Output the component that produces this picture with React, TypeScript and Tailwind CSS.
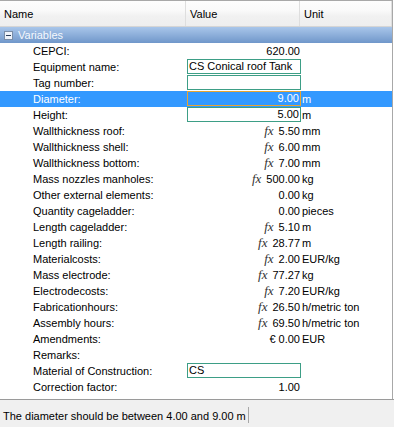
type Row = {
  name: string;
  value?: string;
  unit?: string;
  fx?: boolean;
  box?: "left" | "right";
  selected?: boolean;
};

const rows: Row[] = [
  { name: "CEPCI:", value: "620.00" },
  { name: "Equipment name:", value: "CS Conical roof Tank", box: "left" },
  { name: "Tag number:", value: "", box: "left" },
  { name: "Diameter:", value: "9.00", unit: "m", box: "right", selected: true },
  { name: "Height:", value: "5.00", unit: "m", box: "right" },
  { name: "Wallthickness roof:", value: "5.50", unit: "mm", fx: true },
  { name: "Wallthickness shell:", value: "6.00", unit: "mm", fx: true },
  { name: "Wallthickness bottom:", value: "7.00", unit: "mm", fx: true },
  { name: "Mass nozzles manholes:", value: "500.00", unit: "kg", fx: true },
  { name: "Other external elements:", value: "0.00", unit: "kg" },
  { name: "Quantity cageladder:", value: "0.00", unit: "pieces" },
  { name: "Length cageladder:", value: "5.10", unit: "m", fx: true },
  { name: "Length railing:", value: "28.77", unit: "m", fx: true },
  { name: "Materialcosts:", value: "2.00", unit: "EUR/kg", fx: true },
  { name: "Mass electrode:", value: "77.27", unit: "kg", fx: true },
  { name: "Electrodecosts:", value: "7.20", unit: "EUR/kg", fx: true },
  { name: "Fabricationhours:", value: "26.50", unit: "h/metric ton", fx: true },
  { name: "Assembly hours:", value: "69.50", unit: "h/metric ton", fx: true },
  { name: "Amendments:", value: "€ 0.00", unit: "EUR" },
  { name: "Remarks:" },
  { name: "Material of Construction:", value: "CS", box: "left" },
  { name: "Correction factor:", value: "1.00" },
];

function ValueCell({ row }: { row: Row }) {
  if (row.box) {
    return (
      <div
        className={
          "flex h-[15px] items-center border " +
          (row.selected ? "border-[#e8a530] " : "border-[#3d9e86] ") +
          (row.box === "right" ? "justify-end pr-px" : "justify-start pl-px")
        }
      >
        {row.value}
      </div>
    );
  }
  return (
    <div className="flex h-[16px] items-center justify-end pr-px">
      {row.fx && (
        <span className="mr-[5px] font-['Liberation_Serif',serif] text-[13px] italic text-[#333]">fx</span>
      )}
      {row.value}
    </div>
  );
}

export default function App() {
  return (
    <div className="flex h-[427px] w-[394px] flex-col overflow-hidden bg-white font-['Liberation_Sans',Arial,sans-serif] text-[11px] text-black">
      <div className="flex h-[399px] w-[393px] flex-col border-r border-t border-[#a8a8a8]">
        {/* column header */}
        <div className="flex h-[26px] shrink-0 border-b border-[#d5d5d5] bg-[linear-gradient(to_bottom,#fdfdfd_0%,#f9f9f9_40%,#f1f1f1_60%,#eeeeee_100%)]">
          <div className="flex w-[186px] items-center border-r border-[#dedede] pl-[4px] pt-px">Name</div>
          <div className="flex w-[114px] items-center border-r border-[#dedede] pl-[4px] pt-px">Value</div>
          <div className="flex flex-1 items-center border-r border-[#dedede] pl-[4px] pt-px">Unit</div>
        </div>

        {/* group */}
        <div className="flex h-[16px] shrink-0 items-center bg-[linear-gradient(to_bottom,#a9c6ea,#7097ca)] text-[#f4f8fd]">
          <div className="ml-[4px] mr-[5px] flex h-[9px] w-[9px] items-center justify-center border border-[#7a8ea8] bg-[#eef3fa]">
            <div className="h-px w-[5px] bg-[#2c3e5a]" />
          </div>
          Variables
        </div>

        <div className="flex flex-col">
          {rows.map((row) => (
            <div
              key={row.name}
              className={
                "grid h-[16px] grid-cols-[187px_114px_1fr] " +
                (row.selected ? "bg-[#3399ff] text-white" : "")
              }
            >
              <div className="flex items-center pl-[33px]">{row.name}</div>
              <ValueCell row={row} />
              <div className="flex items-center whitespace-nowrap pl-px">{row.unit}</div>
            </div>
          ))}
        </div>
      </div>

      {/* status bar */}
      <div className="flex h-[28px] shrink-0 items-start border-t border-[#9a9a9a] bg-[#f0f0f0] pt-[7px]">
        <div className="flex h-[16px] w-[249px] items-center border-r border-[#a8a8a8] pl-[3px] pt-[3px]">
          The diameter should be between 4.00 and 9.00 m
        </div>
      </div>
    </div>
  );
}
